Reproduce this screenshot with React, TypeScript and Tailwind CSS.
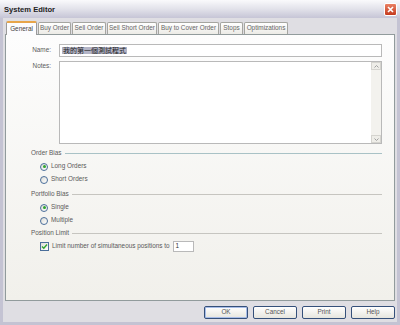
import { useState } from "react";

const tabs = [
  { label: "General", w: "w-[31px]" },
  { label: "Buy Order", w: "w-[33px]" },
  { label: "Sell Order", w: "w-[34px]" },
  { label: "Sell Short Order", w: "w-[50px]" },
  { label: "Buy to Cover Order", w: "w-[61px]" },
  { label: "Stops", w: "w-[23px]" },
  { label: "Optimizations", w: "w-[44px]" },
];

const Radio = ({ checked, label }: { checked: boolean; label: string }) => (
  <div className="flex items-center h-[13px] gap-[3px]">
    <span className="w-[8px] h-[8px] rounded-full border border-[#4a6e9a] bg-gradient-to-br from-[#dcdcd6] to-white flex items-center justify-center">
      {checked && <span className="w-[3px] h-[3px] rounded-full bg-[#2fa32f]" />}
    </span>
    <span>{label}</span>
  </div>
);

const GroupTitle = ({ label, line = "bg-[#c6c5c0]" }: { label: string; line?: string }) => (
  <div className="flex items-center gap-[3px] h-[13px]">
    <span>{label}</span>
    <span className={`flex-1 h-px ${line}`} />
  </div>
);

const Button = ({ label, focused }: { label: string; focused?: boolean }) => (
  <button
    className={`w-[44px] h-[13px] rounded-[2px] border border-[#35507a] bg-gradient-to-b from-white to-[#e6e5de] text-[6.4px] leading-none text-[#555] ${
      focused ? "shadow-[inset_0_0_0_1px_#a8bde8]" : ""
    }`}
  >
    {label}
  </button>
);

export default function App() {
  const [name] = useState("我的第一個測試程式");

  return (
    <div
      className="w-[400px] h-[325px] overflow-hidden bg-[#c4c3d3] flex flex-col text-[6.4px] text-[#5a5a5a] leading-none whitespace-nowrap"
      style={{ fontFamily: '"Liberation Sans", "Noto Sans CJK TC", sans-serif' }}
    >
      {/* title bar */}
      <div className="h-[18px] flex items-center justify-between pl-[4px] pr-[3px] bg-gradient-to-b from-[#fafafc] via-[#e2e2ea] to-[#c6c5d6]">
        <span className="font-bold text-[7.6px] text-[#222] pt-px">System Editor</span>
        <span className="w-[13px] h-[13px] rounded-[2px] border border-white bg-gradient-to-b from-[#e98063] to-[#c4391c] flex items-center justify-center">
          <svg width="7" height="7" viewBox="0 0 7 7">
            <path d="M1 1 L6 6 M6 1 L1 6" stroke="white" strokeWidth="1.6" />
          </svg>
        </span>
      </div>

      {/* body */}
      <div className="flex-1 mx-[3px] mb-[3px] bg-[#dfdee3] flex flex-col px-[2px] pt-[2px]">
        {/* tabs */}
        <div className="flex items-end h-[14px] pl-[1px] gap-[1px]">
          {tabs.map((t, i) =>
            i === 0 ? (
              <div
                key={t.label}
                className={`${t.w} h-[14px] -mb-px relative z-10 bg-[#fcfcfe] border border-b-0 border-[#9a9a9a] border-t-[#e7a54a] border-t-2 rounded-t-[2px] flex items-center justify-center text-[#444]`}
              >
                {t.label}
              </div>
            ) : (
              <div
                key={t.label}
                className={`${t.w} h-[12px] bg-gradient-to-b from-white to-[#ecebe6] border border-b-0 border-[#a5a5a0] rounded-t-[2px] flex items-center justify-center text-[#666]`}
              >
                {t.label}
              </div>
            )
          )}
        </div>

        {/* panel */}
        <div className="h-[267px] border border-[#919b9c] bg-gradient-to-b from-[#fdfdfd] to-[#f1f0eb] pl-[25px] pr-[12px] pt-[9px]">
          <div className="flex items-center gap-[8px] h-[13px]">
            <span className="w-[20px] text-right">Name:</span>
            <div className="flex-1 h-[13px] border border-[#b9b9b9] bg-white flex items-center px-[2px]">
              <span className="bg-[#b3b4c6] text-[#222] text-[7px] px-px">{name}</span>
            </div>
          </div>
          <div className="flex gap-[8px] mt-[4px]">
            <span className="w-[20px] text-right pt-[2px]">Notes:</span>
            <div className="flex-1 h-[83px] border border-[#b9b9b9] bg-white flex justify-end">
              <div className="w-[10px] bg-[#f3f2ee] flex flex-col justify-between">
                <div className="h-[8px] border border-[#d5d4cf] bg-[#eeede8] flex items-center justify-center">
                  <svg width="5" height="3" viewBox="0 0 5 3">
                    <path d="M0.5 2.5 L2.5 0.5 L4.5 2.5" stroke="#a0a0a0" fill="none" />
                  </svg>
                </div>
                <div className="h-[8px] border border-[#d5d4cf] bg-[#eeede8] flex items-center justify-center">
                  <svg width="5" height="3" viewBox="0 0 5 3">
                    <path d="M0.5 0.5 L2.5 2.5 L4.5 0.5" stroke="#a0a0a0" fill="none" />
                  </svg>
                </div>
              </div>
            </div>
          </div>

          <div className="mt-[3px]">
            <GroupTitle label="Order Bias" line="bg-[#a9c2c6]" />
            <div className="pl-[9px]">
              <Radio checked label="Long Orders" />
              <Radio checked={false} label="Short Orders" />
            </div>
          </div>
          <div className="mt-[2px]">
            <GroupTitle label="Portfolio Bias" />
            <div className="pl-[9px]">
              <Radio checked label="Single" />
              <Radio checked={false} label="Multiple" />
            </div>
          </div>
          <div>
            <GroupTitle label="Position Limit" />
            <div className="pl-[9px] flex items-center gap-[3px] h-[12px]">
              <span className="w-[9px] h-[9px] border border-[#4a6e9a] bg-gradient-to-br from-[#dcdcd6] to-white flex items-center justify-center">
                <svg width="7" height="7" viewBox="0 0 7 7">
                  <path d="M1 3.5 L2.8 5.3 L6 1.5" stroke="#2fa32f" strokeWidth="1.4" fill="none" />
                </svg>
              </span>
              <span>Limit number of simultaneous positions to</span>
              <div className="w-[21px] h-[11px] border border-[#b9b9b9] bg-white flex items-center px-[2px] text-[#333]">
                1
              </div>
            </div>
          </div>
        </div>

        {/* buttons */}
        <div className="flex justify-end gap-[5px] pt-[5px]">
          <Button label="OK" focused />
          <Button label="Cancel" />
          <Button label="Print" />
          <Button label="Help" />
        </div>
      </div>
    </div>
  );
}
